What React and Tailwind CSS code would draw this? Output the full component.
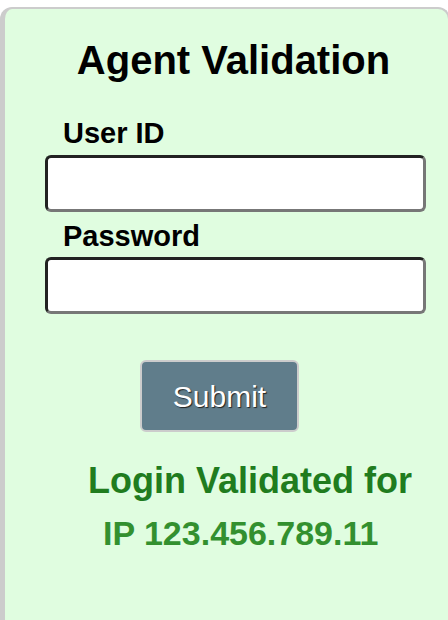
export default function App() {
  const font = { fontFamily: '"Liberation Sans", Arial, sans-serif' };
  return (
    <div className="w-[448px] h-[620px] overflow-hidden bg-white pt-[7px]" style={font}>
      <div className="w-[450px] h-[630px] bg-[#e0fde0] border-t-2 border-l-[5px] border-r-2 border-[#cccccc] rounded-[12px] flex flex-col pt-[28px]">
        <div className="ml-[38px] w-[381px] text-center text-[40px] leading-[46px] font-bold text-black">
          Agent Validation
        </div>
        <label className="mt-[34px] ml-[58px] text-[29px] leading-[32px] font-bold text-black">User ID</label>
        <input className="mt-[6px] ml-[40px] w-[381px] h-[57px] bg-white rounded-[6px] border-[3px] border-t-[#222222] border-l-[#222222] border-b-[#777777] border-r-[#777777] outline-none" />
        <label className="mt-[8px] ml-[58px] text-[29px] leading-[32px] font-bold text-black">Password</label>
        <input type="password" className="mt-[5px] ml-[40px] w-[381px] h-[57px] bg-white rounded-[6px] border-[3px] border-t-[#222222] border-l-[#222222] border-b-[#777777] border-r-[#777777] outline-none" />
        <button className="mt-[46px] ml-[135px] w-[159px] h-[72px] bg-[#607d8b] border-2 border-[#cccccc] rounded-[6px] text-white text-[30px] [text-shadow:1px_1px_1px_#222]">
          Submit
        </button>
        <div className="mt-[22px] flex flex-col font-bold">
          <div className="ml-[83px] text-[36px] leading-[53px] text-[#207c1e]">Login Validated for</div>
          <div className="ml-[98px] text-[34px] leading-[53px] text-[#33902f]">IP 123.456.789.11</div>
        </div>
      </div>
    </div>
  );
}
